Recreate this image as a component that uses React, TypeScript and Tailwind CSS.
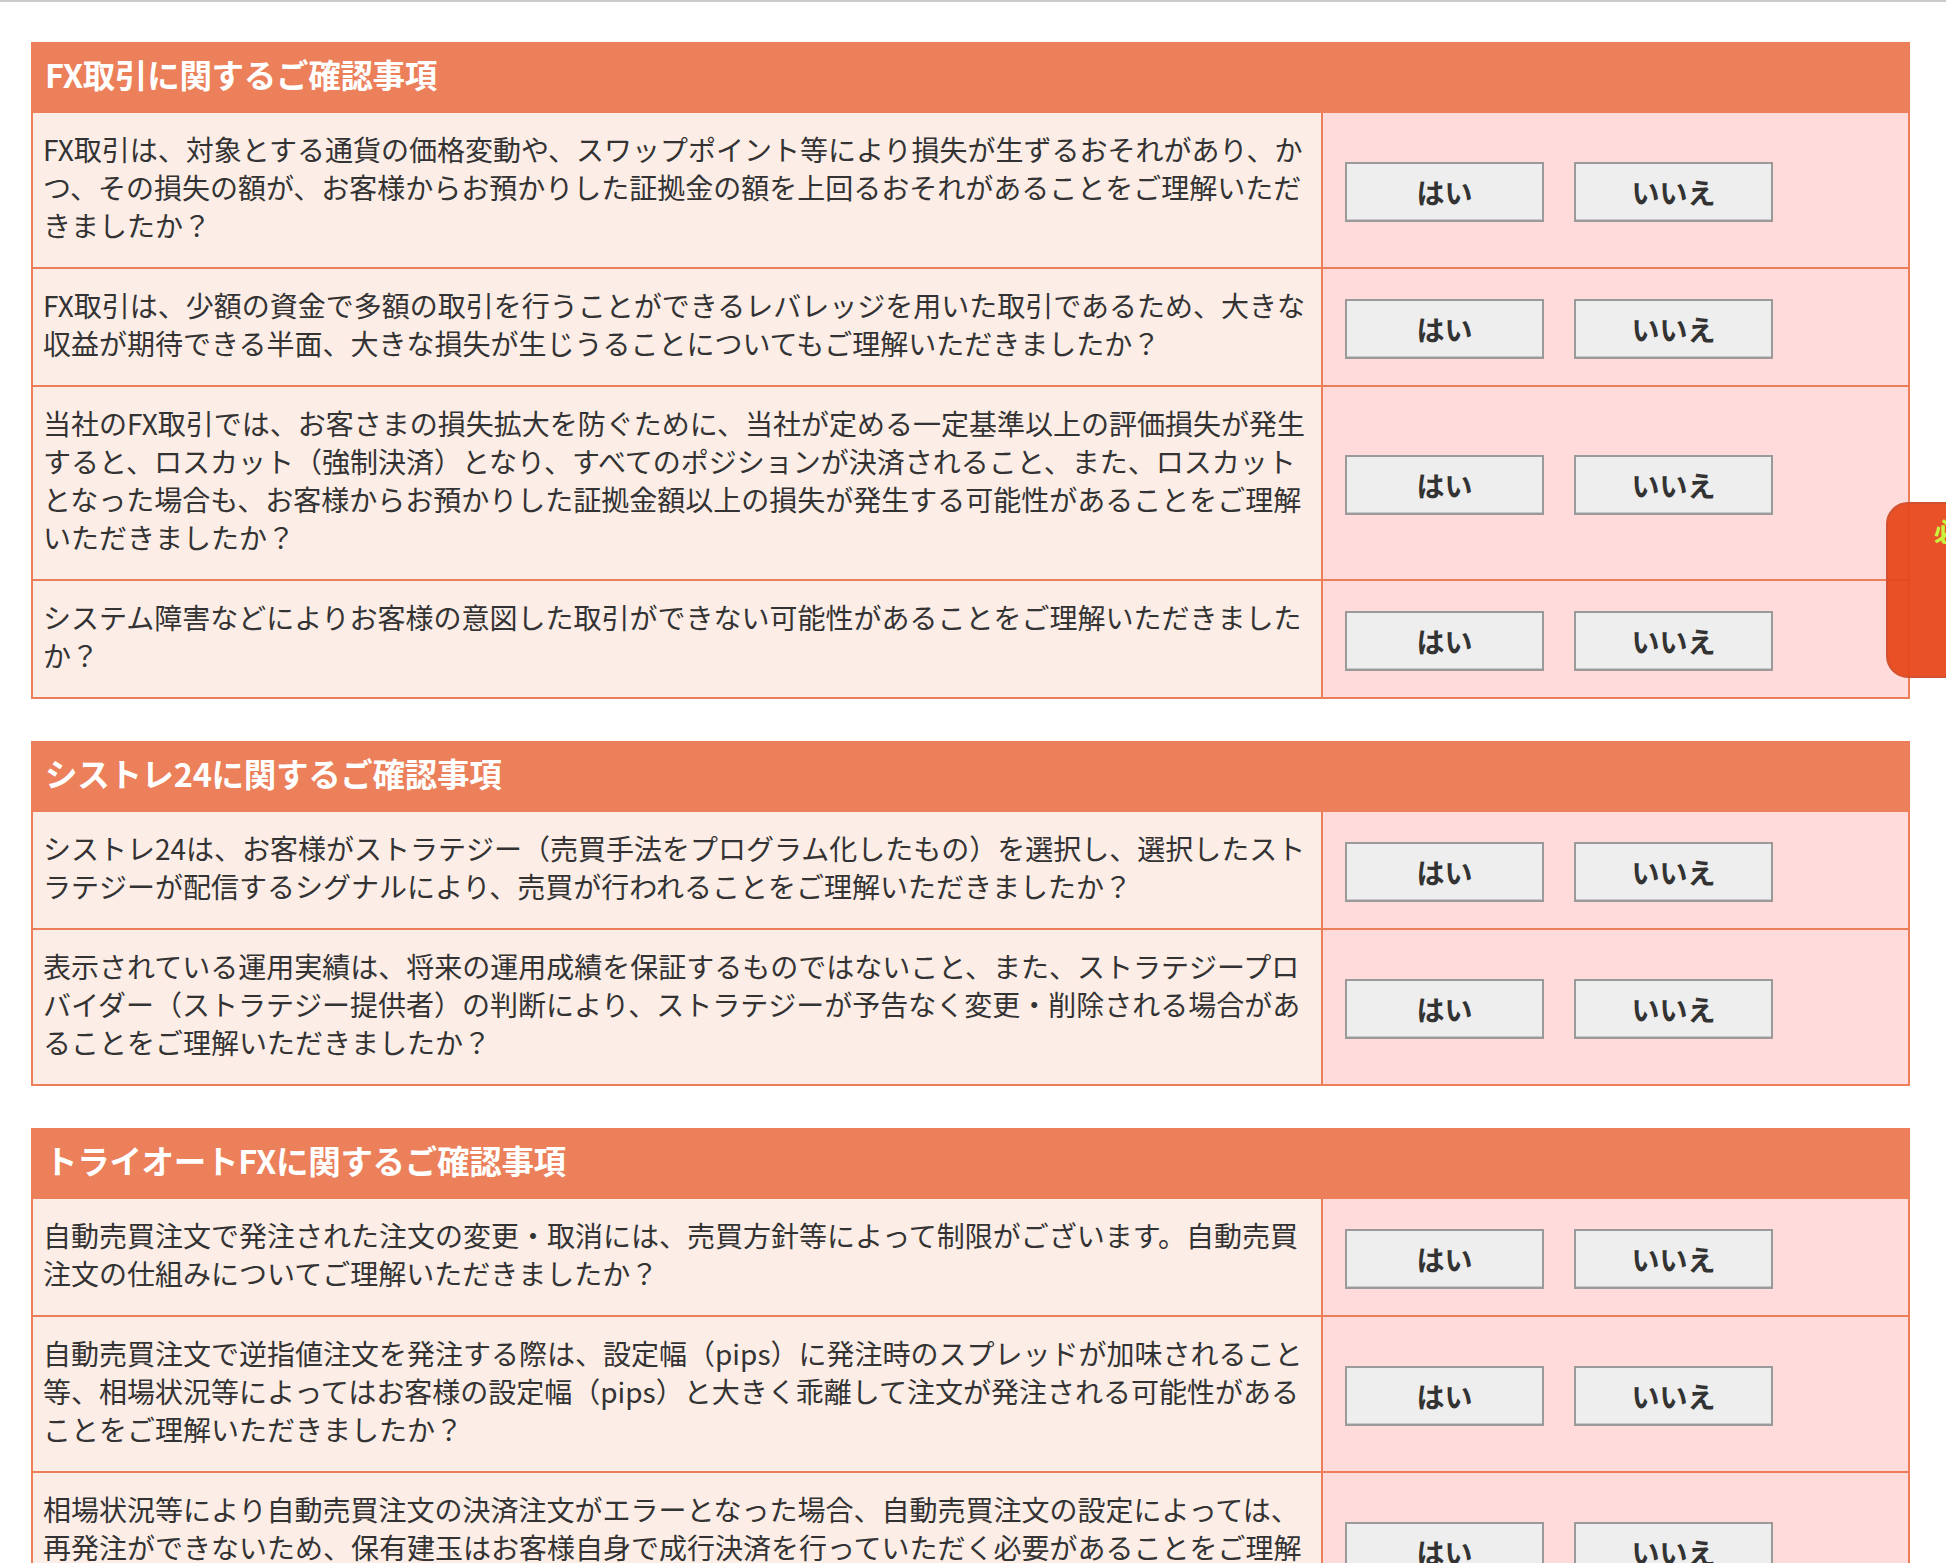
import React from 'react';

interface Section {
  title: string;
  questions: string[];
}

const sections: Section[] = [
  {
    title: 'FX取引に関するご確認事項',
    questions: [
      'FX取引は、対象とする通貨の価格変動や、スワップポイント等により損失が生ずるおそれがあり、かつ、その損失の額が、お客様からお預かりした証拠金の額を上回るおそれがあることをご理解いただきましたか？',
      'FX取引は、少額の資金で多額の取引を行うことができるレバレッジを用いた取引であるため、大きな収益が期待できる半面、大きな損失が生じうることについてもご理解いただきましたか？',
      '当社のFX取引では、お客さまの損失拡大を防ぐために、当社が定める一定基準以上の評価損失が発生すると、ロスカット（強制決済）となり、すべてのポジションが決済されること、また、ロスカットとなった場合も、お客様からお預かりした証拠金額以上の損失が発生する可能性があることをご理解いただきましたか？',
      'システム障害などによりお客様の意図した取引ができない可能性があることをご理解いただきましたか？',
    ],
  },
  {
    title: 'シストレ24に関するご確認事項',
    questions: [
      'シストレ24は、お客様がストラテジー（売買手法をプログラム化したもの）を選択し、選択したストラテジーが配信するシグナルにより、売買が行われることをご理解いただきましたか？',
      '表示されている運用実績は、将来の運用成績を保証するものではないこと、また、ストラテジープロバイダー（ストラテジー提供者）の判断により、ストラテジーが予告なく変更・削除される場合があることをご理解いただきましたか？',
    ],
  },
  {
    title: 'トライオートFXに関するご確認事項',
    questions: [
      '自動売買注文で発注された注文の変更・取消には、売買方針等によって制限がございます。自動売買注文の仕組みについてご理解いただきましたか？',
      '自動売買注文で逆指値注文を発注する際は、設定幅（pips）に発注時のスプレッドが加味されること等、相場状況等によってはお客様の設定幅（pips）と大きく乖離して注文が発注される可能性があることをご理解いただきましたか？',
      '相場状況等により自動売買注文の決済注文がエラーとなった場合、自動売買注文の設定によっては、再発注ができないため、保有建玉はお客様自身で成行決済を行っていただく必要があることをご理解いただきましたか？',
    ],
  },
];

const font = { fontFamily: '"Noto Sans CJK JP", "Noto Sans", sans-serif' };

const AnswerButton: React.FC<{ label: string }> = ({ label }) => (
  <button
    type="button"
    className="w-[199px] h-[60px] bg-[#eeeeee] border-2 border-[#9a9a9a] text-[28px] font-bold text-[#333333] leading-none shadow-[inset_0_-1px_0_#c8c8c8]"
  >
    {label}
  </button>
);

const SectionTable: React.FC<{ section: Section }> = ({ section }) => (
  <div className="border-2 border-[#ec7f5a]">
    <div className="h-[69px] bg-[#eb805b] flex items-center px-[12px] pb-[9px]">
      <h2 className="text-[32.5px] font-bold text-white leading-none tracking-[-0.3px]">{section.title}</h2>
    </div>
    {section.questions.map((q, i) => (
      <div key={i} className={`flex ${i === 0 ? '' : 'border-t-2 border-[#ec7f5a]'}`}>
        <div className="w-[1290px] shrink-0 border-r-2 border-[#ec7f5a] bg-[#fdede7] px-[10px] pt-[17px] pb-[23px]">
          <p className="text-[28px] leading-[38px] text-[#333333]">{q}</p>
        </div>
        <div className="flex-1 bg-[#ffdcdb] flex items-center gap-[30px] pl-[22px] pt-[3px]">
          <AnswerButton label="はい" />
          <AnswerButton label="いいえ" />
        </div>
      </div>
    ))}
  </div>
);

const App: React.FC = () => {
  return (
    <div className="relative min-h-screen bg-white overflow-hidden" style={font}>
      <div className="h-[2px] bg-[#cacaca]" />
      <div className="ml-[31px] w-[1879px] pt-[40px] pb-[40px] flex flex-col gap-[42px]">
        {sections.map((s) => (
          <SectionTable key={s.title} section={s} />
        ))}
      </div>

      {/* side tab, mostly off screen */}
      <div className="absolute top-[502px] right-[-80px] w-[140px] h-[176px] rounded-l-[22px] bg-[#e8481c]/95 border-2 border-[#d2522f] pl-[46px] pt-[14px]">
        <span className="text-[26px] font-bold text-[#c8f23e] leading-none">必</span>
      </div>
    </div>
  );
};

export default App;
